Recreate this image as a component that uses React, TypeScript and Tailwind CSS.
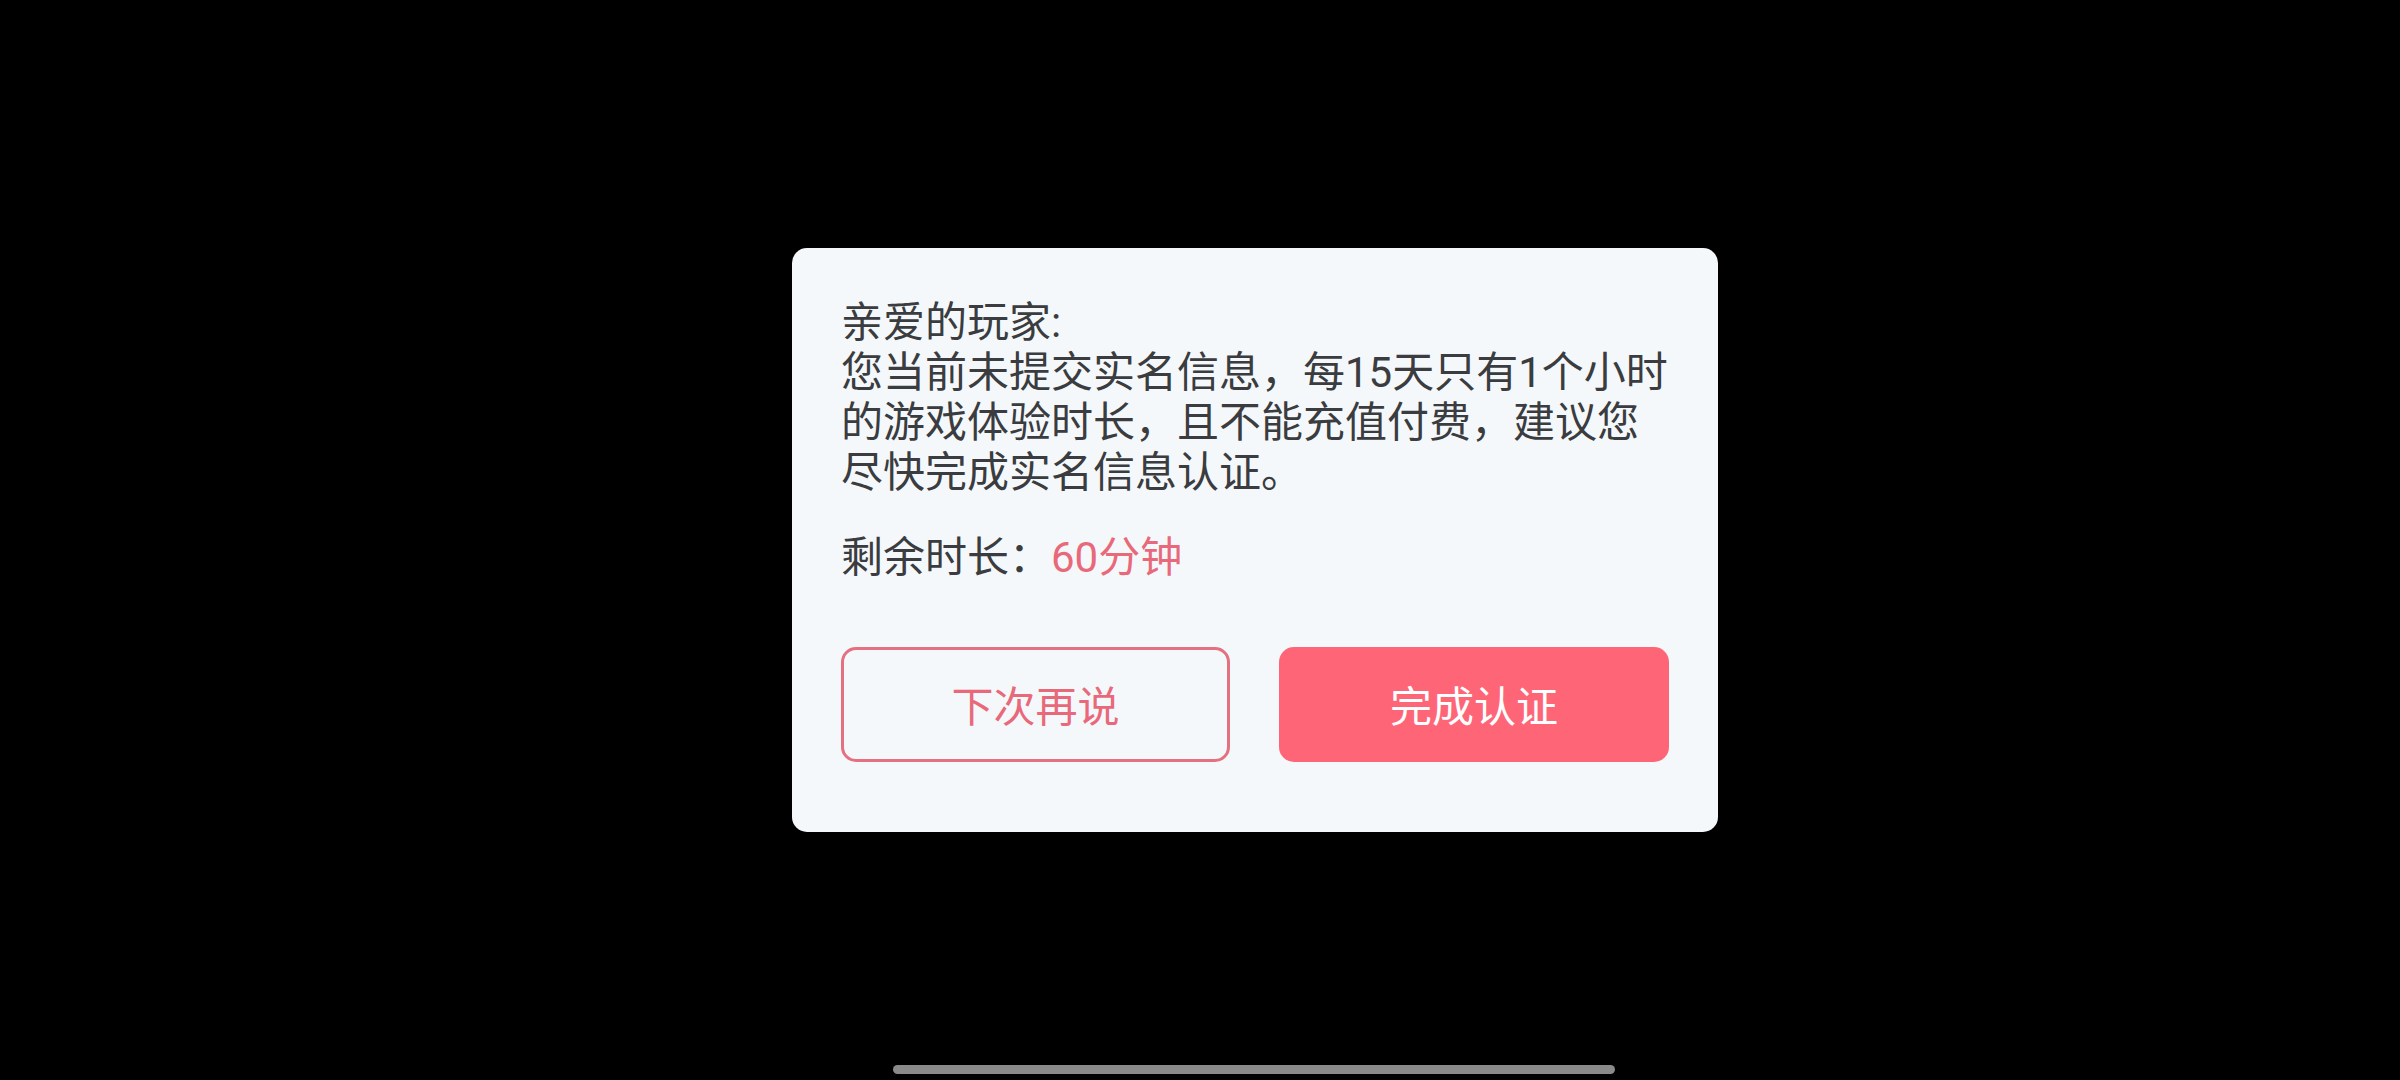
import React from "react";

export default function App() {
  const font = { fontFamily: 'Roboto, "Noto Sans CJK SC", sans-serif' };
  return (
    <div
      className="relative w-[2400px] h-[1080px] bg-black flex items-center justify-center pl-[110px]"
      style={font}
    >
      <div className="w-[926px] rounded-[15px] bg-[#f5f8fb] pt-[50px] pb-[70px] px-[49px] flex flex-col">
        <div className="text-[42px] leading-[50px] text-[#3a3c40] whitespace-nowrap">
          <div>亲爱的玩家:</div>
          <div>您当前未提交实名信息，每15天只有1个小时</div>
          <div>的游戏体验时长，且不能充值付费，建议您</div>
          <div>尽快完成实名信息认证。</div>
        </div>
        <div className="mt-[35px] text-[42px] leading-[50px] text-[#3a3c40] whitespace-nowrap">
          剩余时长：<span className="text-[#e8697a]">60分钟</span>
        </div>
        <div className="mt-[64px] flex gap-[49px]">
          <div className="w-[389px] h-[115px] pt-[5px] rounded-[15px] border-[3px] border-[#e5707f] flex items-center justify-center text-[42px] text-[#e8697a]">
            下次再说
          </div>
          <div className="w-[390px] h-[115px] pt-[5px] rounded-[15px] bg-[#fe6677] flex items-center justify-center text-[42px] text-white">
            完成认证
          </div>
        </div>
      </div>
      <div className="absolute bottom-[6px] left-[893px] w-[722px] h-[9px] rounded-full bg-[#8a8a8a]" />
    </div>
  );
}
